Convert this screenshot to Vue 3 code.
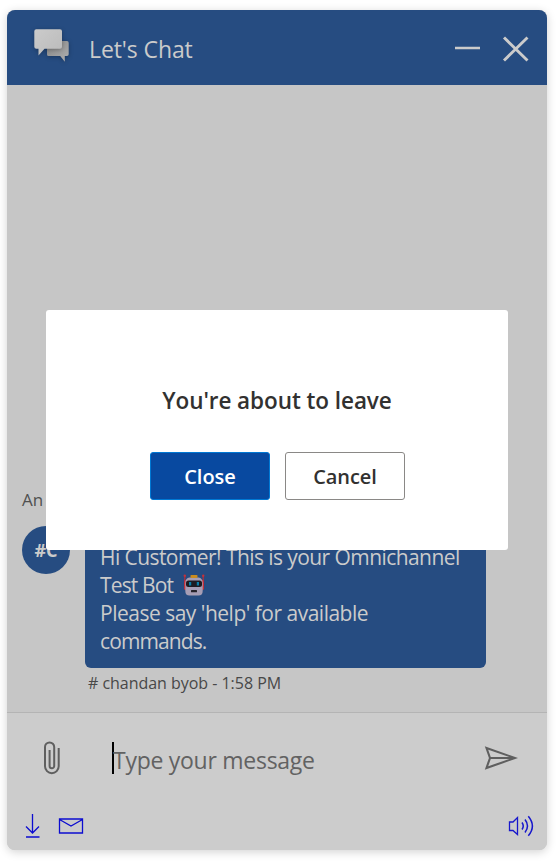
<script setup>
const title = "Let's Chat"
const lines = ['Hi Customer! This is your Omnichannel', 'Test Bot', "Please say 'help' for available", 'commands.']
</script>

<template>
  <main class="stage">
    <section class="chat">
      <header class="header">
        <svg class="logo" width="48" height="44" viewBox="0 0 48 44">
          <defs>
            <linearGradient id="front" x1="0" y1="0" x2="1" y2="1">
              <stop offset="0" stop-color="#cbcbcb" /><stop offset="1" stop-color="#bababa" />
            </linearGradient>
            <linearGradient id="back" x1="0" y1="0" x2="1" y2="1">
              <stop offset="0" stop-color="#858585" /><stop offset="1" stop-color="#b0b0b0" />
            </linearGradient>
          </defs>
          <path class="shade" fill="url(#back)" d="M17 19.500Q17 18 18.500 18H37Q38.700 18 38.700 19.700V31.300Q38.700 33 37 33H34.800V38.700L30.200 33H18.500Q17 33 17 31.500Z" />
          <path class="shade" fill="url(#front)" d="M6.300 6.200H30Q32 6.200 32 8.200V23.800Q32 25.800 30 25.800H14.500L8.500 32.500V25.800H6.300Q4.300 25.800 4.300 23.800V8.200Q4.300 6.200 6.300 6.200Z" />
        </svg>
        <h1 class="title"><span>{{ title }}</span></h1>
        <svg class="window-icons" width="76" height="28" viewBox="0 0 76 28">
          <path d="M1 13H26" stroke="#cbcbcb" stroke-width="2.700" />
          <path d="M50 2.500L73.500 25.500M73.500 2.500L50 25.500" stroke="#cbcbcb" stroke-width="2.900" />
        </svg>
      </header>

      <div class="transcript">
        <p class="status">An</p>
        <div class="message">
          <div class="avatar">#C</div>
          <div class="message-content">
            <div class="bubble">
              <p v-for="(line, i) in lines" :key="i" class="line" :class="'line-' + i">
                <span>{{ line }}</span>
                <svg v-if="i === 1" class="robot" width="22" height="22" viewBox="0 0 22 22">
                  <path d="M1.800 1.500V7M20.200 1.500V7" stroke="#b52f3b" stroke-width="1.200" />
                  <circle cx="1.800" cy="1.700" r="1.200" fill="#c4313b" /><circle cx="20.200" cy="1.700" r="1.200" fill="#c4313b" />
                  <rect x="1" y="6" width="3" height="10" rx="1.500" fill="#c42e38" /><rect x="18" y="6" width="3" height="10" rx="1.500" fill="#c42e38" />
                  <path d="M6.500 3.500H15.500Q19.700 4 19.700 9V17Q19.700 21.500 15.500 21.500H6.500Q2.300 21.500 2.300 17V9Q2.300 4 6.500 3.500Z" fill="#a69db4" />
                  <rect x="7.500" y="1" width="7" height="3" rx=".8" fill="#c98c20" />
                  <rect x="3" y="6.500" width="16" height="6.500" rx="2.500" fill="#1d1b21" />
                  <rect x="6" y="8" width="2.200" height="3.500" fill="#087ea8" /><rect x="13.800" y="8" width="2.200" height="3.500" fill="#087ea8" />
                  <rect x="8" y="16" width="6" height="2.200" rx=".5" fill="#25222a" />
                </svg>
              </p>
            </div>
            <p class="stamp"><span># chandan byob - 1:58 PM</span></p>
          </div>
        </div>
      </div>

      <footer class="footer">
        <div class="composer">
          <svg class="clip" width="18" height="36" viewBox="0 0 18 36">
            <path d="M15.700 8V26.300A6.850 6.850 0 0 1 2 26.300V7A4.400 4.400 0 0 1 11.200 7V26A2.300 2.300 0 0 1 6.600 26V10" fill="none" stroke="#5f5f5f" stroke-width="2" />
          </svg>
          <div class="input"><i class="caret"></i><span class="placeholder">Type your message</span></div>
          <svg class="send" width="34" height="24" viewBox="0 0 34 24">
            <path d="M2.500 2L31 12L2.500 22L6 12ZM6 12H31" fill="none" stroke="#5f5f5f" stroke-width="2.100" />
          </svg>
        </div>
        <div class="tools">
          <svg width="16" height="26" viewBox="0 0 16 26">
            <path d="M7.500 1V20M1 13.500L7.500 20L14 13.500M1 24H14.500" fill="none" stroke="#0c0cd0" stroke-width="1.300" />
          </svg>
          <svg class="mail" width="26" height="18" viewBox="0 0 26 18">
            <path d="M1.500 2H24.500V16H1.500ZM1.500 2.500L13 9L24.500 2.500" fill="none" stroke="#0c0cd0" stroke-width="1.300" />
          </svg>
          <svg class="sound" width="27" height="22" viewBox="0 0 27 22">
            <path d="M9.500 2.500V19.500L5 15.500H1.500V7H5Z" fill="none" stroke="#1717cc" stroke-width="1.300" />
            <path d="M14 7.500Q16.500 11 14 14.500M17 4.500Q22 11 17 17.500M20.300 1.200Q28.500 11 20.300 20.800" fill="none" stroke="#1717cc" stroke-width="1.500" />
          </svg>
        </div>
      </footer>
    </section>

    <section class="dialog">
      <h2 class="question"><span>You're about to leave</span></h2>
      <div class="actions">
        <button class="button primary" type="button"><span>Close</span></button>
        <button class="button" type="button"><span>Cancel</span></button>
      </div>
    </section>
  </main>
</template>

<style>
body { background: #fff; }
</style>

<style scoped>
* { box-sizing: border-box; margin: 0; }
svg { display: block; flex: none; }
.stage { position: relative; width: 556px; height: 861px; padding: 10px 9px 11px 7px; overflow: hidden; background: #fff; font-family: "Open Sans", "Noto Sans", sans-serif; white-space: nowrap; }
.chat { display: flex; flex-direction: column; width: 540px; height: 840px; border-radius: 8px; overflow: hidden; background: #c6c6c6; box-shadow: 0 2px 10px rgba(0, 0, 0, .18); }
.header { display: flex; align-items: center; flex: none; height: 75px; padding: 0 17px 0 23px; background: #264c81; color: #cbcbcb; }
.logo { margin-top: -5px; }
.shade { filter: drop-shadow(0 1px 2px rgba(0, 0, 0, .28)); }
.title { flex: 1; padding-left: 11px; font-size: 23px; font-weight: 400; line-height: 32px; letter-spacing: -.1px; margin-top: 3px; }
.window-icons { margin-top: 3px; }
.transcript { display: flex; flex-direction: column; justify-content: flex-end; flex: 1; padding: 0 0 17px 15px; }
.status { font-size: 17px; line-height: 24px; letter-spacing: 0; color: #505050; margin-bottom: 14px; }
.message { display: flex; align-items: flex-start; gap: 15px; }
.avatar { width: 48px; height: 48px; border-radius: 50%; background: #264c81; color: #cbcbcb; display: flex; align-items: center; justify-content: center; font-size: 18px; font-weight: 700; }
.message-content { padding-top: 5px; }
.bubble { width: 401px; height: 137px; padding: 12px 15px 13px; border-radius: 6px; background: #264c81; color: #cbcbcb; }
.line { display: flex; align-items: center; height: 28px; font-size: 21px; line-height: 28px; letter-spacing: -.57px; }
.line-1 { letter-spacing: -.85px; }
.line-2 { letter-spacing: -.5px; }
.line-3 { letter-spacing: -.9px; }
.robot { margin-left: 10px; }
.stamp { margin-top: 4px; padding-left: 3px; height: 23px; font-size: 16px; line-height: 22px; letter-spacing: -.03px; color: #484848; }
.footer { flex: none; height: 138px; border-top: 1px solid #b4b4b4; background: #cccccc; }
.composer { display: flex; align-items: center; height: 90px; padding: 0 29px 0 36px; }
.input { display: flex; align-items: center; flex: 1; padding-left: 51px; }
.caret { width: 2px; height: 32px; background: #000; }
.placeholder { font-size: 23px; line-height: 32px; letter-spacing: -.27px; color: #626262; margin: 3px 0 0 -1px; }
.tools { display: flex; align-items: center; height: 46px; padding: 0 12px 0 18px; }
.mail { margin-left: 17px; }
.sound { margin-left: auto; }
.dialog { position: absolute; left: 46px; top: 310px; width: 462px; height: 240px; padding-top: 74px; background: #fff; border-radius: 3px; color: #323130; }
.question { text-align: center; font-size: 22.5px; line-height: 34px; font-weight: 550; letter-spacing: -.07px; }
.actions { display: flex; gap: 15px; margin-top: 34px; padding-left: 104px; }
.button { width: 120px; height: 48px; padding: 1px 0 0; border: 1px solid #8a8886; border-radius: 3px; background: #fff; color: #323130; font-family: inherit; font-size: 20px; font-weight: 550; letter-spacing: -.1px; }
.primary { background: #0849a0; border-color: #0078d4; color: #fff; font-weight: 600; letter-spacing: 0; }
</style>
